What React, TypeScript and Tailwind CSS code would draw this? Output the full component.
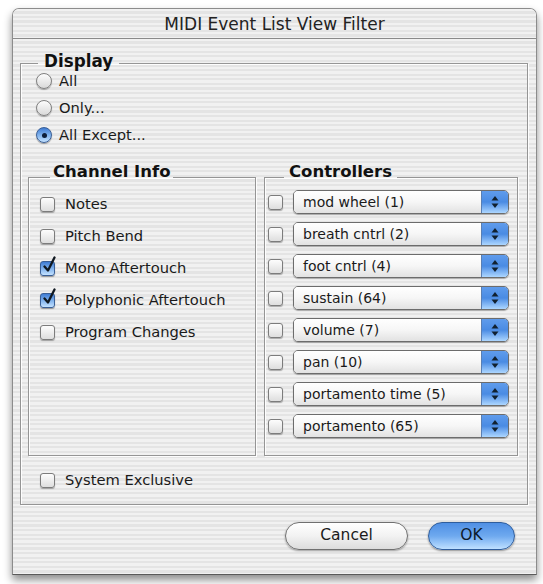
import type { ReactNode } from "react";

const stripes =
  "bg-[repeating-linear-gradient(180deg,#f1f1f1_0px,#f1f1f1_2.3px,#e4e4e4_2.3px,#e4e4e4_4.6px)]";

function CheckBox({ checked = false }: { checked?: boolean }) {
  return (
    <span
      className={
        checked
          ? "relative inline-block h-[15px] w-[15px] shrink-0 rounded-[3px] border border-[#3a5f96] bg-gradient-to-b from-[#3e7bd3] via-[#7fb1ec] to-[#c4e2ff] shadow-[0_1px_1px_rgba(0,0,0,0.35)]"
          : "relative inline-block h-[15px] w-[15px] shrink-0 rounded-[3px] border border-[#7c7c7c] bg-gradient-to-b from-[#fdfdfd] to-[#dedede] shadow-[0_1px_1px_rgba(0,0,0,0.3)]"
      }
    >
      {checked && (
        <svg className="absolute -top-[6px] left-[1px]" width="16" height="18" viewBox="0 0 16 18">
          <path d="M2.5 10.5 L6 14.5 L12.5 1.5" fill="none" stroke="#101820" strokeWidth="2.3" strokeLinecap="round" strokeLinejoin="round" />
        </svg>
      )}
    </span>
  );
}

function Radio({ on = false }: { on?: boolean }) {
  return (
    <span
      className={
        on
          ? "flex h-[16px] w-[16px] shrink-0 items-center justify-center rounded-full border border-[#3a5f96] bg-gradient-to-b from-[#3e7bd3] via-[#7fb1ec] to-[#c4e2ff] shadow-[0_1px_1px_rgba(0,0,0,0.35)]"
          : "flex h-[16px] w-[16px] shrink-0 items-center justify-center rounded-full border border-[#808080] bg-gradient-to-b from-[#fdfdfd] to-[#d9d9d9] shadow-[0_1px_1px_rgba(0,0,0,0.3)]"
      }
    >
      {on && <span className="h-[5px] w-[5px] rounded-full bg-[#0d1e3a]" />}
    </span>
  );
}

function Popup({ label }: { label: string }) {
  return (
    <div className="flex h-[24px] w-[216px] overflow-hidden rounded-[5px] border border-[#6c6c6c] shadow-[0_1px_1px_rgba(0,0,0,0.3)]">
      <div className="flex flex-1 items-center bg-gradient-to-b from-[#ffffff] via-[#f6f6f6] to-[#e2e2e2] pl-[9px] text-[14px] text-[#1a1a1a]">
        {label}
      </div>
      <div className="flex w-[27px] items-center justify-center border-l border-[#5a7fb3] bg-gradient-to-b from-[#5f9cec] via-[#4a8be3] to-[#acd6ff]">
        <svg width="8" height="14" viewBox="0 0 8 14">
          <polygon points="4,1 7.5,5.5 0.5,5.5" fill="#10202f" />
          <polygon points="0.5,8.5 7.5,8.5 4,13" fill="#10202f" />
        </svg>
      </div>
    </div>
  );
}

function Group({ title, className, legendClass, children }: { title: string; className: string; legendClass: string; children: ReactNode }) {
  return (
    <fieldset className={"border border-[#959595] shadow-[1px_1px_0_rgba(255,255,255,0.9),inset_1px_1px_0_rgba(255,255,255,0.9)] " + className}>
      <legend className={"font-bold text-[#111] " + legendClass}>{title}</legend>
      {children}
    </fieldset>
  );
}

const channelInfo = [
  { label: "Notes", checked: false },
  { label: "Pitch Bend", checked: false },
  { label: "Mono Aftertouch", checked: true },
  { label: "Polyphonic Aftertouch", checked: true },
  { label: "Program Changes", checked: false },
];

const controllers = [
  "mod wheel (1)",
  "breath cntrl (2)",
  "foot cntrl (4)",
  "sustain (64)",
  "volume (7)",
  "pan (10)",
  "portamento time (5)",
  "portamento (65)",
];

export default function App() {
  return (
    <div className="h-[584px] w-[543px] overflow-hidden bg-white pl-[12px] pt-[8px] font-['DejaVu_Sans','Liberation_Sans',sans-serif] text-[14.7px] text-[#1a1a1a]">
      <div className="flex h-[567px] w-[525px] flex-col overflow-hidden rounded-t-[7px] border border-[#8c8c8c] border-b-[#5a5a5a] shadow-[0_5px_9px_rgba(0,0,0,0.45)]">
        <div className={"flex h-[30px] shrink-0 items-center justify-center border-b border-[#8a8a8a] pt-[2px] text-[17px] text-[#222] " + stripes}>
          MIDI Event List View Filter
        </div>

        <div className={"flex flex-1 flex-col pl-[7px] pt-[15px] " + stripes}>
          <Group title="Display" className="ml-0 w-[508px] pb-[15px] pl-[7px] pr-0" legendClass="ml-[10px] px-[6px] pb-[4px] text-[16.8px] leading-[14px]">
            <div className="flex flex-col gap-[9px] pl-[8px]">
              {[
                { label: "All", on: false },
                { label: "Only...", on: false },
                { label: "All Except...", on: true },
              ].map((r) => (
                <div key={r.label} className="flex h-[18px] items-center gap-[7px]">
                  <Radio on={r.on} />
                  <span>{r.label}</span>
                </div>
              ))}
            </div>

            <div className="mt-[20px] flex items-stretch gap-[8px]">
              <Group title="Channel Info" className="w-[228px] pl-[11px]" legendClass="ml-[10px] px-[3px] pb-[10px] text-[16.5px] leading-[16px]">
                <div className="flex flex-col gap-[14px] pt-[5px]">
                  {channelInfo.map((c) => (
                    <div key={c.label} className="flex h-[18px] items-center gap-[10px]">
                      <CheckBox checked={c.checked} />
                      <span>{c.label}</span>
                    </div>
                  ))}
                </div>
              </Group>

              <Group title="Controllers" className="w-[254px] pb-[17px] pl-[3px]" legendClass="ml-[16px] px-[5px] pb-[10px] text-[16.5px] leading-[16px]">
                <div className="flex flex-col gap-[8px]">
                  {controllers.map((c) => (
                    <div key={c} className="flex h-[24px] items-center gap-[10px]">
                      <CheckBox />
                      <Popup label={c} />
                    </div>
                  ))}
                </div>
              </Group>
            </div>

            <div className="ml-[12px] mt-[15px] flex h-[18px] items-center gap-[10px]">
              <CheckBox />
              <span>System Exclusive</span>
            </div>
          </Group>

          <div className="mt-[17px] flex justify-end gap-[20px] pr-[21px]">
            <button className="flex h-[28px] w-[123px] items-center justify-center rounded-full border border-[#707070] bg-gradient-to-b from-[#ffffff] via-[#f2f2f2] to-[#dcdcdc] text-[15.5px] text-[#1a1a1a] shadow-[0_1px_2px_rgba(0,0,0,0.35)]">
              Cancel
            </button>
            <button className="flex h-[28px] w-[87px] items-center justify-center rounded-full border border-[#2f5d9c] bg-gradient-to-b from-[#4f8fe4] via-[#6ea9ef] to-[#bfe0ff] text-[15.5px] text-[#0d1a2a] shadow-[0_1px_2px_rgba(0,0,0,0.4)]">
              OK
            </button>
          </div>
        </div>
      </div>
    </div>
  );
}
